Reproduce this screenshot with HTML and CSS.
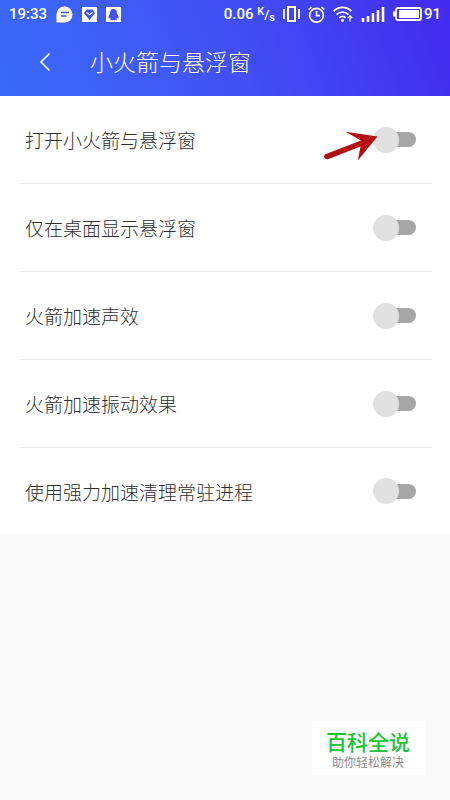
FILE: index.html
```html
<!DOCTYPE html>
<html lang="zh-CN">
<head>
<meta charset="utf-8">
<meta name="viewport" content="width=device-width, initial-scale=1">
<title>小火箭与悬浮窗</title>
<link rel="stylesheet" href="styles.css">
</head>
<body>
<header class="header">
  <div class="status">
    <div class="status-left">
      <span class="time">19:33</span>
      <svg width="17" height="17" viewBox="0 0 17 17" aria-hidden="true"><path d="M.5 16.500V8.500A8 8 0 1 1 8.500 16.500Z" fill="#fff"/><path d="M5 6.500h8M5 10h5.500" stroke="#4453e8" stroke-width="1.600"/></svg>
      <svg width="15" height="15" viewBox="0 0 15 15" aria-hidden="true"><path d="M0 0h15v15H0z" fill="#fff"/><path d="M4.500 2.500h6L13 6.300 7.500 13 2 6.300z" fill="#4453e8"/><path d="M4.500 5.500l3 2.200 3-2.200" fill="none" stroke="#fff" stroke-width="1.100"/></svg>
      <svg width="15" height="15" viewBox="0 0 15 15" aria-hidden="true"><path d="M0 0h15v15H0z" fill="#fff"/><path d="M7.500 2C5 2 4 3.800 4 6.200L2.500 9.500v2l1.300-.7.900 1.200-.9 1.300h3l.7-.5.700.5h3l-.9-1.300.9-1.200 1.300.7v-2L11 6.200C11 3.800 10 2 7.500 2z" fill="#4453e8"/></svg>
    </div>
    <div class="status-right">
      <span class="speed">0.06 <span class="unit"><sup>K</sup>/<sub>s</sub></span></span>
      <svg width="17" height="16" viewBox="0 0 17 16" fill="none" stroke="#fff" aria-hidden="true"><path d="M5 1h7v14H5z" stroke-width="2"/><path d="M1 3v10M16 3v10" stroke-width="1.800"/></svg>
      <svg width="17" height="17" viewBox="0 0 17 17" fill="none" stroke="#fff" stroke-width="1.700" aria-hidden="true"><circle cx="8.500" cy="9.200" r="6.900"/><path d="M8.500 5v4.700h3.500M.8 3.500L3.500 1M16.200 3.500L13.500 1"/></svg>
      <svg width="20" height="16" viewBox="0 0 20 16" fill="none" stroke="#fff" stroke-width="1.800" aria-hidden="true"><path d="M.7 5.200a12 12 0 0 1 17.600 0M3.500 8.600a8.300 8.300 0 0 1 12 0M6.300 11.800a4.600 4.600 0 0 1 6.400 0"/><circle cx="9.500" cy="14.200" r="1.500" fill="#fff" stroke="none"/><path d="M17 9.500v6M14.800 12l2.200-2.300 2.200 2.300" stroke-width="1.300"/></svg>
      <svg width="24" height="15" viewBox="0 0 24 15" stroke="#fff" stroke-width="2.600" aria-hidden="true"><path d="M2 15v-4M7 15V9M12 15V6M17 15V3M22 15V0"/></svg>
      <span class="battery">
        <svg width="29" height="14" viewBox="0 0 29 14" fill="none" stroke="#fff" aria-hidden="true"><rect x="3" y="1" width="25" height="12" rx="2" stroke-width="1.800"/><path d="M0 4.500h2.500v5H0zM6 3h20v8H6z" fill="#fff" stroke="none"/></svg>
        <span>91</span>
      </span>
    </div>
  </div>
  <div class="titlebar">
    <button class="back" type="button" aria-label="返回"><svg width="12" height="20" viewBox="0 0 12 20" fill="none" stroke="#fff" stroke-width="1.600" aria-hidden="true"><path d="M10.500 1.500L2 10l8.500 8.500"/></svg></button>
    <h1>小火箭与悬浮窗</h1>
  </div>
</header>
<main class="settings">
  <div class="row">
    <label for="rocket">打开小火箭与悬浮窗</label>
    <span class="control">
      <input class="switch" id="rocket" type="checkbox" role="switch">
      <svg class="arrow" width="56" height="30" viewBox="0 0 56 30" aria-hidden="true"><path d="M3 23L38 9.500 22.500 .8 54.500 5.500 34.800 29.500 37.500 15.500 5.500 28Q2.500 29 1.300 26.500 .4 24 3 23z" fill="#b40f12"/></svg>
    </span>
  </div>
  <div class="row"><label for="desktop">仅在桌面显示悬浮窗</label><input class="switch" id="desktop" type="checkbox" role="switch"></div>
  <div class="row"><label for="sound">火箭加速声效</label><input class="switch" id="sound" type="checkbox" role="switch"></div>
  <div class="row"><label for="vibrate">火箭加速振动效果</label><input class="switch" id="vibrate" type="checkbox" role="switch"></div>
  <div class="row"><label for="clean">使用强力加速清理常驻进程</label><input class="switch" id="clean" type="checkbox" role="switch"></div>
</main>
<aside class="brand">
  <strong>百科全说</strong>
  <span>助你轻松解决</span>
</aside>
</body>
</html>
```
FILE: styles.css
```css
* {
  box-sizing: border-box;
}

body {
  margin: 0;
  min-height: 100vh;
  background: #fafafa;
  color: #303030;
  font-family: Roboto, "Noto Sans CJK SC", sans-serif;
  font-weight: 300;
}

svg {
  display: block;
  flex: none;
}

.header {
  background: linear-gradient(70deg, #386af8 0%, #405af5 35%, #4146f2 65%, #432aee 100%);
  color: #fff;
}

.status {
  display: flex;
  justify-content: space-between;
  height: 28px;
  padding: 0 9px;
  font-size: 15px;
  font-weight: 500;
  line-height: 28px;
}

.status-left,
.status-right,
.battery {
  display: flex;
  align-items: center;
}

.status-left {
  gap: 9px;
}

.status-right {
  gap: 8px;
}

.battery {
  gap: 2px;
}

.speed {
  white-space: nowrap;
}

.unit {
  font-size: 13px;
}

.unit sup,
.unit sub {
  font-size: 11px;
  line-height: 0;
}

.unit sup {
  vertical-align: 4px;
}

.unit sub {
  vertical-align: -2px;
}

.titlebar {
  display: flex;
  align-items: center;
  gap: 28px;
  height: 68px;
  padding-left: 28px;
}

.back {
  display: flex;
  align-items: center;
  justify-content: center;
  width: 34px;
  height: 44px;
  padding: 0;
  border: 0;
  background: none;
}

h1 {
  margin: 0;
  padding-top: 4px;
  font-size: 23px;
  font-weight: 300;
  line-height: 34px;
}

.settings {
  padding: 0 18px 0 20px;
  background: #fff;
}

.row {
  display: flex;
  align-items: center;
  justify-content: space-between;
  height: 88px;
  padding: 0 16px 0 5px;
  border-bottom: 1px solid #e9e9e9;
  font-size: 19px;
}

.row:last-child {
  height: 86px;
  border-bottom: 0;
}

.control {
  position: relative;
  display: flex;
}

.switch {
  appearance: none;
  display: flex;
  align-items: center;
  width: 43px;
  height: 26px;
  margin: 0;
}

.switch::before {
  content: "";
  z-index: 1;
  flex: none;
  width: 26px;
  height: 26px;
  border-radius: 50%;
  background: #e1e1e1;
}

.switch::after {
  content: "";
  flex: none;
  width: 30px;
  height: 15px;
  margin-left: -13px;
  border-radius: 8px;
  background: #a6a6a6;
}

.switch:checked {
  flex-direction: row-reverse;
}

.switch:checked::after {
  margin: 0 -13px 0 0;
}

.arrow {
  position: absolute;
  z-index: 2;
  right: 37px;
  top: 4px;
  pointer-events: none;
}

.brand {
  position: fixed;
  right: 25px;
  bottom: 25px;
  display: flex;
  flex-direction: column;
  align-items: center;
  padding: 9px 15px 4px 14px;
  background: #fff;
}

.brand strong {
  color: #16c535;
  font-size: 21px;
  font-weight: 500;
  line-height: 26px;
}

.brand span {
  color: #8b8b8b;
  font-size: 12px;
  font-weight: 400;
  line-height: 15px;
}
```
